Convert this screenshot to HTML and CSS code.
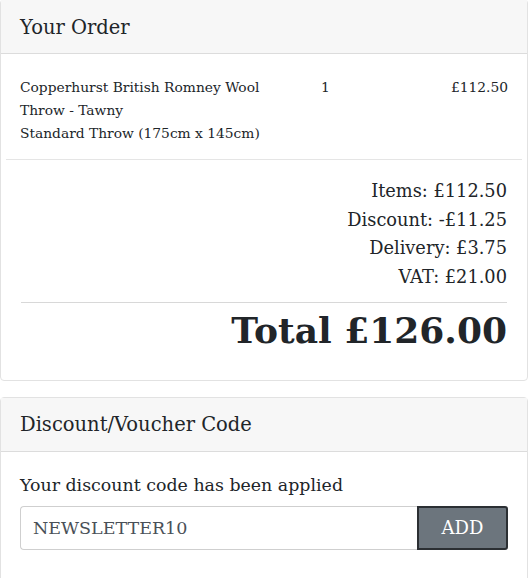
FILE: index.html
```html
<!DOCTYPE html>
<html>
<head>
<meta charset="utf-8">
<link rel="stylesheet" href="styles.css">
</head>
<body>
<div class="card order">
  <div class="card-header">Your Order</div>
  <div class="card-body">
    <div class="item">
      <div class="item-name">Copperhurst British Romney Wool<br>Throw - Tawny<br>Standard Throw (175cm x 145cm)</div>
      <div class="item-qty">1</div>
      <div class="item-price">£112.50</div>
    </div>
    <div class="summary">
      <div class="line">Items: £112.50</div>
      <div class="line">Discount: -£11.25</div>
      <div class="line">Delivery: £3.75</div>
      <div class="line">VAT: £21.00</div>
      <div class="total">Total £126.00</div>
    </div>
  </div>
</div>
<div class="card voucher">
  <div class="card-header">Discount/Voucher Code</div>
  <div class="card-body">
    <div class="msg">Your discount code has been applied</div>
    <div class="input-group">
      <div class="input">NEWSLETTER10</div>
      <button class="btn">ADD</button>
    </div>
  </div>
</div>
</body>
</html>
```
FILE: styles.css
```css
html, body { margin: 0; padding: 0; background: #fff; }
body {
  font-family: "DejaVu Serif", "Liberation Serif", serif;
  color: #212529;
  width: 528px;
  overflow: hidden;
}
.card {
  border: 1px solid #e2e2e2;
  border-radius: 4px;
  background: #fff;
  width: 526px;
}
.order { margin-top: -1px; }
.voucher { margin-top: 16px; }
.card-header {
  background: #f7f7f7;
  border-bottom: 1px solid #dcdcdc;
  height: 54px;
  box-sizing: border-box;
  padding: 1px 19px 0 19px;
  display: flex;
  align-items: center;
  font-size: 19.5px;
}
.order .card-body { padding: 0 5px 0 5px; }
.item {
  display: grid;
  grid-template-columns: 301px 1fr auto;
  padding: 22px 14px 14px 14px;
  border-bottom: 1px solid #e5e5e5;
  font-size: 13.8px;
  line-height: 23px;
}
.item-price { text-align: right; }
.summary {
  padding: 17px 15px 2px 15px;
  text-align: right;
}
.line { font-size: 17.8px; line-height: 28.7px; }
.total {
  border-top: 1px solid #d8d8d8;
  margin-top: 10px;
  font-size: 36px;
  font-weight: bold;
  line-height: 54px;
  padding-bottom: 21px;
}
.voucher .card-body { padding: 20px 19px 40px 19px; }
.msg { font-size: 17.4px; line-height: 27px; margin-bottom: 7px; }
.input-group { display: flex; height: 44px; }
.input {
  flex: 1;
  border: 1px solid #cfcfcf;
  border-right: none;
  border-radius: 4px 0 0 4px;
  display: flex;
  align-items: center;
  padding: 0 12px;
  font-size: 17.5px;
  color: #495057;
}
.btn {
  width: 91px;
  background: #6c757d;
  border: 2px solid #2b2f33;
  border-radius: 0 3px 3px 0;
  color: #fff;
  font-family: inherit;
  font-size: 18px;
  padding: 0;
}
```
